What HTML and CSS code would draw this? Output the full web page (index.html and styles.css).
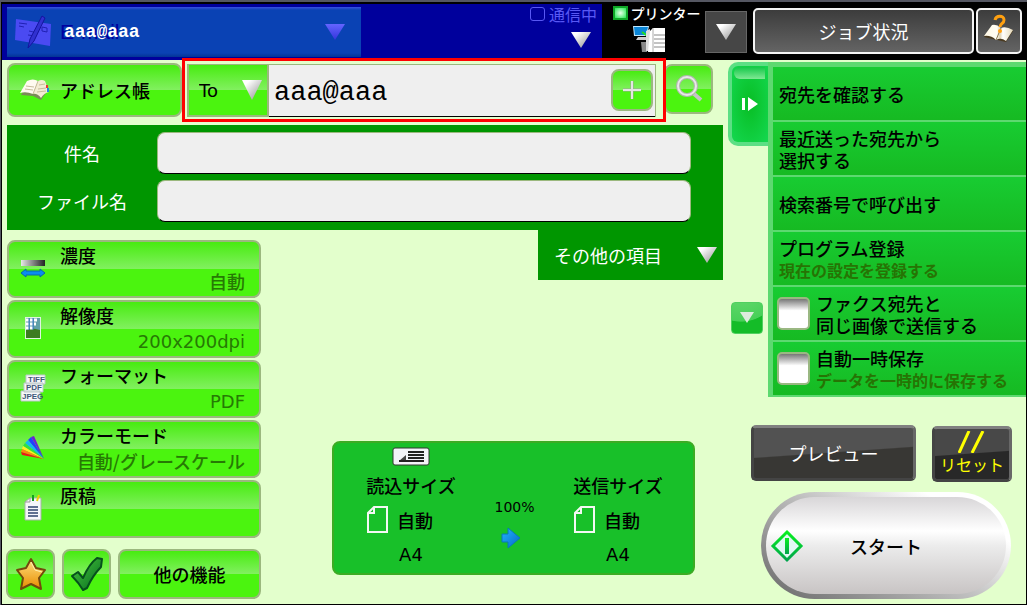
FILE: index.html
```html
<!DOCTYPE html>
<html lang="ja">
<head>
<meta charset="utf-8">
<meta name="viewport" content="width=device-width, initial-scale=1">
<title>E-mail</title>
<link rel="stylesheet" href="styles.css">
</head>
<body>
<svg class="defs" width="0" height="0" aria-hidden="true">
  <defs>
    <linearGradient id="silver" x1="0" y1="0" x2="1" y2="1"><stop offset="0.2" stop-color="#fff"/><stop offset="0.8" stop-color="#a8a8a8"/></linearGradient>
    <linearGradient id="violet" x1="0" y1="0" x2="0" y2="1"><stop offset="0" stop-color="#6464ff"/><stop offset="1" stop-color="#3434dc"/></linearGradient>
    <linearGradient id="blue" x1="0" y1="0" x2="1" y2="1"><stop offset="0" stop-color="#22b4ff"/><stop offset="1" stop-color="#0668c8"/></linearGradient>
    <linearGradient id="gold" x1="0" y1="0" x2="0" y2="1"><stop offset="0" stop-color="#ffe080"/><stop offset="1" stop-color="#e88c00"/></linearGradient>
    <linearGradient id="grey" x1="0" y1="0" x2="1" y2="0"><stop offset="0" stop-color="#e8e8e8"/><stop offset="1" stop-color="#222"/></linearGradient>
    <linearGradient id="page" x1="0" y1="0" x2="1" y2="0"><stop offset="0" stop-color="#fff8e4"/><stop offset="0.45" stop-color="#fffdf4"/><stop offset="0.55" stop-color="#ddd0b0"/><stop offset="0.65" stop-color="#fff"/><stop offset="1" stop-color="#e4d8b8"/></linearGradient>
    <linearGradient id="tick" x1="0" y1="0" x2="1" y2="1"><stop offset="0" stop-color="#4ac83c"/><stop offset="1" stop-color="#046a20"/></linearGradient>
    <linearGradient id="go" x1="0" y1="0" x2="0" y2="1"><stop offset="0" stop-color="#08f020"/><stop offset="1" stop-color="#00a44c"/></linearGradient>
  </defs>
</svg>
<div class="screen">
  <header class="topbar">
    <div class="mode">
      <button class="mode-tab" type="button">
        <svg class="mode-icon" width="38" height="34" viewBox="0 0 38 34"><path d="M2 4 L37 9 L36 31 L1 25Z" fill="#4a4af2"/><path d="M5 8l8 1M5 11l5 1M15 16l9 2M14 20l8 1M28 12l5 1v4l-5-1z" stroke="#2020b4" fill="none"/><path d="M28 1l3 2-11 23-6 7 2-9z" fill="#3030d0" stroke="#1414a0"/></svg>
        <span class="mode-name">E-mail<span class="mode-address">aaa@aaa</span></span>
        <svg class="mode-arrow" width="20" height="16" viewBox="0 0 20 16"><path d="M0 0H20L10 16Z" fill="url(#violet)"/></svg>
      </button>
      <button class="comm" type="button">
        <span class="comm-line"><i class="comm-lamp"></i>通信中</span>
        <svg width="20" height="16" viewBox="0 0 20 16"><path d="M0 0H20L10 16Z" fill="url(#silver)"/></svg>
      </button>
    </div>
    <div class="printer">
      <span class="printer-line"><i class="printer-lamp"></i>プリンター</span>
      <svg width="34" height="28" viewBox="0 0 34 28"><path d="M0 1h16l-2 10H1z" fill="#bfe8ff"/><path d="M1 2h14l-2 8H2z" fill="#0a86d8"/><path d="M5 12h8v3H3z" fill="#ccc"/><path d="M9 7l7 5" stroke="#20e020" stroke-width="2"/><path d="M8 17h6v10H9z" fill="#888"/><path d="M13 6l4-2v22h-4z" fill="#ddd"/><path d="M17 6l3-3h12v24H15z" fill="#fff"/><path d="M20 3v24" stroke="#aaa"/><path d="M21 10h11M21 14h11M21 18h11M21 22h11" stroke="#888"/></svg>
    </div>
    <button class="status-toggle" type="button" aria-label="状況を開く"><svg width="20" height="16" viewBox="0 0 20 16"><path d="M0 0H20L10 16Z" fill="url(#silver)"/></svg></button>
    <button class="dark-button jobs" type="button">ジョブ状況</button>
    <button class="dark-button help" type="button" aria-label="ヘルプ"><svg width="32" height="30" viewBox="0 0 32 30"><path d="M9 12L30 17 23 28 1 23Z" fill="#4a3a20"/><path d="M9 11Q14 10 18 14Q23 12 30 16L23 27Q18 23 13 26Q8 21 1 22Z" fill="url(#page)"/><path d="M18 14L13 26" stroke="#8a7850"/><path d="M12 6c1-5 9-5 9 0c0 4-4 3-4 7" fill="none" stroke="#ffa010" stroke-width="3"/><circle cx="17" cy="17" r="2" fill="#ffa010"/></svg></button>
  </header>

  <div class="workspace">
    <main class="left">
      <div class="address-row">
        <button class="glossy book" type="button"><svg width="32" height="22" viewBox="0 0 32 22"><path d="M2 17L9 5 20 5 29 12 22 22 14 18Z" fill="#7a8a58"/><path d="M1 15L8 3Q14 0 19 3L14 16Q7 13 1 15Z" fill="#fffaf0"/><path d="M19 3Q23 1 26 3L30 14Q25 15 22 20Q18 15 14 16Z" fill="#f4ecd4"/><path d="M19 3L14 16M7 8l8 1M6 11l8 1M20 7l6-1M19 11l8-1M18 14l9-1" stroke="#c8bc9c" fill="none"/><path d="M28 7v3" stroke="#e33" stroke-width="2"/><path d="M29 10v4" stroke="#28d" stroke-width="2"/></svg>アドレス帳</button>
        <div class="recipient">
          <label class="to"><select class="latin" aria-label="宛先種別"><option>To</option><option>Cc</option><option>Bcc</option></select>
            <svg class="to-arrow" width="20" height="20" viewBox="0 0 20 20"><path d="M0 0H20L10 20Z" fill="url(#silver)"/></svg></label>
          <input class="recipient-input" type="text" value="aaa@aaa" aria-label="宛先">
          <button class="glossy plus" type="button" aria-label="追加"><svg width="20" height="20" viewBox="0 0 20 20"><path d="M10 1V19M1 10H19" stroke="#9aa894" stroke-width="3"/><path d="M10 1V19M1 10H19" stroke="#e4e4e4" stroke-width="2"/></svg></button>
        </div>
        <button class="glossy search" type="button" aria-label="検索"><svg width="28" height="28" viewBox="0 0 28 28"><path d="M18 18l8 7" stroke="#c4c4c4" stroke-width="4"/><circle cx="12" cy="11" r="9" fill="none" stroke="#b0b8ac" stroke-width="4"/><circle cx="12" cy="11" r="9" fill="none" stroke="#e8e8e8" stroke-width="2"/></svg></button>
      </div>

      <div class="fields">
        <label for="subject">件名</label><input id="subject" type="text">
        <label for="filename">ファイル名</label><input id="filename" type="text">
      </div>

      <div class="lower">
        <div class="settings">
          <button class="glossy setting" type="button"><svg width="28" height="28" viewBox="0 0 28 28"><rect x="2" y="6" width="24" height="6" fill="url(#grey)"/><path d="M2 19l5-4v2h14v-2l5 4-5 4v-2H7v2z" fill="#0a8cf0" stroke="#0868a8"/></svg><span class="setting-name">濃度</span><span class="setting-value">自動</span></button>
          <button class="glossy setting" type="button"><svg width="28" height="28" viewBox="0 0 28 28"><rect x="6" y="3" width="16" height="22" fill="#dff4e0"/><rect x="7" y="4" width="14" height="12" fill="#60a0a8"/><path d="M7 16q5-3 14 0v8H7z" fill="#3c7c20"/><path d="M7 6h11M7 10h10M7 14h8" stroke="#fff" stroke-width="3" stroke-dasharray="3 1"/><path d="M10 4v12M14 4v12" stroke="#3474c8"/></svg><span class="setting-name">解像度</span><span class="setting-value latin">200x200dpi</span></button>
          <button class="glossy setting" type="button"><svg class="format-icon" width="28" height="28" viewBox="0 0 28 28"><path d="M7 1h19v9H7zM5 9h19v9H5zM2 17h19v10H2z" fill="#f6f8fa" stroke="#bcc8c8"/><text x="9" y="8">TIFF</text><text x="7" y="16">PDF</text><text x="3" y="25">JPEG</text></svg><span class="setting-name">フォーマット</span><span class="setting-value latin">PDF</span></button>
          <button class="glossy setting" type="button"><svg width="28" height="28" viewBox="0 0 28 28"><path d="M25 25L12 3 15 2Z" fill="#7020d0"/><path d="M25 25L9 6 12 3Z" fill="#2040ff"/><path d="M25 25L6 9 9 6Z" fill="#10b8f0"/><path d="M25 25L4 12 6 9Z" fill="#30e040"/><path d="M25 25L3 15 4 12Z" fill="#fff020"/><path d="M25 25L2 18 3 15Z" fill="#ff8810"/><path d="M25 25L3 21 2 18Z" fill="#f01818"/></svg><span class="setting-name">カラーモード</span><span class="setting-value">自動/グレースケール</span></button>
          <button class="glossy setting" type="button"><svg width="28" height="28" viewBox="0 0 28 28"><path d="M6 8l5-4h11v22H6z" fill="#f6f6fa" stroke="#a8b4a8"/><path d="M6 8h5V4" fill="none" stroke="#999"/><path d="M9 13h10M9 16h10M9 19h10M9 22h10" stroke="#607090" stroke-width="2"/><path d="M14 1v6" stroke="#10a020" stroke-width="2"/><path d="M20 1l-2 6" stroke="#f0d000" stroke-width="2"/></svg><span class="setting-name">原稿</span></button>
          <div class="tools">
            <button class="glossy tool" type="button" aria-label="お気に入り"><svg width="34" height="36" viewBox="0 0 34 36"><path d="M17 3L22 12 31 14 25 22 27 33 17 28 7 33 9 22 3 14 12 12Z" fill="url(#gold)" stroke="#74480c" stroke-width="2" stroke-linejoin="round"/><path d="M17 6l4 8 7 2" fill="none" stroke="#fff0b0"/></svg></button>
            <button class="glossy tool" type="button" aria-label="設定確認"><svg width="36" height="36" viewBox="0 0 36 36"><path d="M3 20L9 16 14 22Q20 8 28 2L33 3 32 11Q24 19 18 32L14 34Q10 27 3 20Z" fill="url(#tick)" stroke="#06501c" stroke-width="2" stroke-linejoin="round"/></svg></button>
            <button class="glossy other" type="button">他の機能</button>
          </div>
        </div>

        <div class="center">
          <button class="more" type="button">その他の項目<svg width="20" height="16" viewBox="0 0 20 16"><path d="M0 0H20L10 16Z" fill="url(#silver)"/></svg></button>
          <section class="sizes">
            <div class="size">
              <svg class="feeder" width="38" height="19" viewBox="0 0 38 19"><rect x="1" y="1" width="36" height="17" rx="2" fill="#f2f3f8" stroke="#303830"/><path d="M7 14L14 8V14Z" fill="#444"/><path d="M16 5h16M16 8h16M16 11h16M7 14h25" stroke="#222" stroke-width="2"/></svg>
              <span>読込サイズ</span>
              <span class="paper"><svg width="22" height="28" viewBox="0 0 22 28"><path d="M7 1H20V26H1V7Z" fill="none" stroke="#f4f8f4" stroke-width="2"/><path d="M7 1V7H1" fill="none" stroke="#f4f8f4" stroke-width="2"/></svg>自動</span>
              <span class="latin">A4</span>
            </div>
            <div class="ratio latin"><span>100%</span><svg width="20" height="22" viewBox="0 0 20 22"><path d="M1 7H7V1L19 11 7 21V15H1Z" fill="url(#blue)" stroke="#0878b8"/></svg></div>
            <div class="size">
              <span class="feeder"></span>
              <span>送信サイズ</span>
              <span class="paper"><svg width="22" height="28" viewBox="0 0 22 28"><path d="M7 1H20V26H1V7Z" fill="none" stroke="#f4f8f4" stroke-width="2"/><path d="M7 1V7H1" fill="none" stroke="#f4f8f4" stroke-width="2"/></svg>自動</span>
              <span class="latin">A4</span>
            </div>
          </section>
        </div>
      </div>
    </main>

    <aside class="right">
      <div class="drawer">
        <div class="handles">
          <button class="handle" type="button" aria-label="パネルを閉じる"><svg width="16" height="14" viewBox="0 0 16 14"><path d="M0 1h3v12H0zM6 0l10 7-10 7z" fill="#fff"/></svg></button>
          <button class="scroll" type="button" aria-label="次へ"><svg width="14" height="12" viewBox="0 0 14 12"><path d="M0 0H14L7 11Z" fill="#dcecdc"/></svg></button>
        </div>
        <div class="menu">
          <button type="button">宛先を確認する</button>
          <button type="button">最近送った宛先から<br>選択する</button>
          <button type="button">検索番号で呼び出す</button>
          <button type="button">プログラム登録<small>現在の設定を登録する</small></button>
          <label><input type="checkbox"><span>ファクス宛先と<br>同じ画像で送信する</span></label>
          <label><input type="checkbox"><span>自動一時保存<small>データを一時的に保存する</small></span></label>
        </div>
      </div>
      <div class="actions">
        <div class="action-pair">
          <button class="preview" type="button">プレビュー</button>
          <button class="reset" type="button"><svg width="28" height="22" viewBox="0 0 28 22"><path d="M1 22L11 0M14 22L25 0" stroke="#ff0" stroke-width="3"/></svg>リセット</button>
        </div>
        <button class="start" type="button"><svg width="34" height="34" viewBox="0 0 34 34"><path d="M17 3L31 17 17 31 3 17Z" fill="#e0f8f4" stroke="url(#go)" stroke-width="3"/><path d="M15 9h4v16h-4z" fill="url(#go)"/></svg>スタート</button>
      </div>
    </aside>
  </div>
</div>
</body>
</html>
```

FILE: styles.css
```css
* { box-sizing: border-box; }

body {
  margin: 0;
  background: #000;
  color: #000;
  font: 500 18px/22px "Noto Sans CJK JP", "Noto Sans", sans-serif;
}

button, input, select {
  margin: 0;
  padding: 0;
  border: 0;
  font: inherit;
  color: inherit;
}

button { background: none; }
svg { display: block; flex: none; }
.defs { position: absolute; }
.latin { font-family: "DejaVu Sans", "Noto Sans CJK JP", sans-serif; }

.screen {
  display: flex;
  flex-direction: column;
  min-height: 100vh;
  padding: 2px 1px 1px 1px;
  background: #000;
  border-top: 2px solid #555762;
  border-left: 1px solid #555762;
}

.topbar { display: flex; height: 56px; color: #fff; font-weight: 400; }

.mode { flex: 1; display: flex; justify-content: space-between; background: #00009c; }

.mode-tab {
  flex: 0 1 354px;
  display: flex;
  align-items: center;
  margin: 3px 0 3px 5px;
  padding: 0 16px 0 7px;
  background: linear-gradient(#3a50e0 0, #0a42b4 3px, #0a42b4 92%, #043494);
}
.mode-icon { margin-right: 8px; }
.mode-name { flex: 1; position: relative; text-align: left; color: #0000a0; font: 400 21px/22px "Liberation Sans", sans-serif; }
.mode-address { position: absolute; left: 4px; top: 0; color: #fff; font: 700 18px/22px "Liberation Mono", monospace; }

.comm {
  display: flex;
  flex-direction: column;
  align-items: flex-end;
  gap: 8px;
  padding: 0 5px 0 0;
  color: #5858f4;
  font-size: 16px;
  line-height: 20px;
}
.comm-line { display: flex; align-items: center; gap: 4px; }
.comm-lamp { width: 15px; height: 14px; border: 1px solid #5858f4; border-radius: 3px; }
.comm svg { margin-right: 6px; }

.printer {
  display: flex;
  flex-direction: column;
  align-items: center;
  gap: 3px;
  width: 103px;
  padding-left: 6px;
  font-size: 14px;
  font-weight: 500;
  line-height: 18px;
}
.printer svg { margin-right: 14px; }
.printer-line { display: flex; align-items: center; gap: 3px; }
.printer-lamp { width: 15px; height: 14px; border: 2px solid #10a828; background: radial-gradient(#e8ffe8, #20e850); }

.status-toggle {
  display: flex;
  align-items: center;
  justify-content: center;
  width: 42px;
  height: 42px;
  margin: 7px 6px 0 0;
  border: 1px solid #666;
  background: #464646;
}

.dark-button {
  height: 46px;
  margin-top: 4px;
  border: 2px solid #f4f4f4;
  border-radius: 5px;
  background: linear-gradient(#3c3c3c, #646464);
}
.jobs { width: 221px; margin-right: 2px; }
.help { display: flex; align-items: center; justify-content: center; width: 46px; margin-right: 4px; padding-bottom: 4px; }

.workspace { flex: 1; display: flex; background: #e3ffcc; }
.left { flex: 1; min-width: 0; padding: 3px 5px 5px 5px; }

.glossy {
  border: 2px solid #9bb87e;
  border-radius: 8px;
  background: linear-gradient(#47ec10 0, #82f060 50%, #4bf40f 50%);
}

.address-row { display: flex; align-items: flex-start; height: 62px; }
.book { display: flex; flex: none; align-items: center; gap: 9px; width: 175px; height: 54px; padding-left: 10px; }
.book svg { margin-bottom: 2px; }

.recipient { position: relative; flex: 1; min-width: 0; display: flex; height: 53px; margin: 1px 8px 0 5px; background: #efefef; border-top: 1px solid #9bb87e; border-right: 1px solid #9bb87e; }
.recipient::after { content: ""; position: absolute; inset: -7px -11px -5px -5px; border: 3px solid #f00; pointer-events: none; z-index: 1; }
.to { position: relative; flex: none; width: 82px; border: 2px solid #9bb87e; border-top: 0; background: linear-gradient(#47ec10 0, #82f060 50%, #4bf40f 50%); }
.to select { appearance: none; width: 100%; height: 100%; padding: 2px 0 0 10px; background: none; }
.to-arrow { position: absolute; right: 5px; top: 15px; pointer-events: none; }
.recipient-input { flex: 1; min-width: 0; padding: 4px 48px 0 5px; background: none; border-bottom: 1px solid #000; font: 400 27px/32px "Liberation Mono", monospace; }
.plus { position: absolute; right: 2px; top: 4px; display: flex; align-items: center; justify-content: center; width: 42px; height: 42px; }
.search { display: flex; flex: none; align-items: center; justify-content: center; width: 49px; height: 50px; margin: 1px 10px 0 0; }

.fields {
  display: grid;
  grid-template-columns: 150px 1fr;
  gap: 6px 0;
  padding: 7px 32px 8px 0;
  background: #009600;
  color: #fff;
  font-weight: 400;
}
.fields label { align-self: center; text-align: center; }
.fields input { height: 42px; min-width: 0; padding: 0 10px; border: 1px solid #9bb87e; border-bottom-color: #000; border-radius: 8px; background: #efefef; color: #000; }

.lower { display: flex; }
.settings { display: flex; flex-direction: column; gap: 2px; width: 254px; padding-top: 10px; }
.setting {
  display: grid;
  grid-template-columns: 40px 1fr;
  grid-template-rows: 26px 26px;
  column-gap: 1px;
  height: 58px;
  padding: 0 14px 2px 10px;
}
.setting svg { grid-column: 1; grid-row: 1 / 3; align-self: center; }
.setting-name { grid-column: 2; grid-row: 1; text-align: left; line-height: 26px; }
.setting-value { grid-column: 2; grid-row: 2; text-align: right; line-height: 26px; color: #267a04; }
.setting-value.latin { line-height: 28px; }
.format-icon text { font: 700 8px/8px "Liberation Sans", sans-serif; fill: #405878; }

.tools { display: flex; gap: 7px; margin: 9px 0 0 -1px; }
.tool { display: flex; align-items: center; justify-content: center; width: 49px; height: 50px; }
.other { flex: 1; height: 50px; }

.center { flex: 1; display: flex; flex-direction: column; }
.more {
  display: flex;
  align-items: center;
  justify-content: space-between;
  align-self: flex-end;
  width: 185px;
  height: 50px;
  padding: 0 6px 0 16px;
  background: #009600;
  color: #fff;
  font-weight: 400;
}
.sizes {
  display: flex;
  justify-content: space-between;
  margin: 161px 28px 0 71px;
  height: 134px;
  padding: 4px 28px 0 30px;
  border: 2px solid #3cac24;
  border-radius: 8px;
  background: #18c029;
}
.size { display: flex; flex-direction: column; align-items: center; width: 94px; }
.feeder { height: 19px; margin-bottom: 8px; }
.paper { display: flex; align-items: center; gap: 8px; align-self: flex-start; margin: 10px 0; padding-left: 3px; height: 28px; }
.ratio { display: flex; flex-direction: column; align-items: center; gap: 9px; padding-top: 49px; font-size: 14px; }
.ratio svg { margin-right: 7px; }

.right { display: flex; flex-direction: column; width: 298px; padding-top: 2px; }
.drawer { display: flex; }
.handles { display: flex; flex-direction: column; align-items: center; width: 40px; }
.handle {
  position: relative;
  display: flex;
  align-items: center;
  justify-content: center;
  width: 40px;
  height: 84px;
  border: 4px solid #5cdf84;
  border-right: 0;
  border-radius: 10px 0 0 10px;
  background: radial-gradient(#08be24, #14d850);
}
.handle::before { content: ""; position: absolute; left: 2px; right: 3px; top: 1px; height: 12px; border-radius: 6px 0 0 6px; background: linear-gradient(#14c848, #80e894); }
.scroll {
  display: flex;
  align-items: center;
  justify-content: center;
  width: 32px;
  height: 32px;
  margin: 156px 2px 0 0;
  border: 1px solid #50d060;
  border-radius: 4px;
  background: radial-gradient(circle 40px at 30% -70%, #70dc78 0, #48d058 98%, #14bc28 100%);
}

.menu { flex: 1; border: 5px solid #5dd970; border-right: 0; border-bottom: 0; }
.menu button, .menu label {
  display: flex;
  flex-direction: column;
  align-items: flex-start;
  justify-content: center;
  width: 100%;
  height: 55px;
  padding: 0 6px;
  border-bottom: 2px solid #5dd970;
  background: linear-gradient(#18cc32, #16ba22);
  text-align: left;
}
.menu label { flex-direction: row; align-items: center; justify-content: flex-start; gap: 6px; padding: 0 4px; }
.menu small { display: block; font-size: 16px; font-weight: 700; color: #267404; line-height: 22px; }
.menu input {
  appearance: none;
  flex: none;
  width: 33px;
  height: 33px;
  border: 2px solid #9ab882;
  border-radius: 5px;
  background: linear-gradient(#777, #fff 40%);
}

.actions { padding: 28px 14px 0 23px; }
.action-pair { display: flex; justify-content: space-between; align-items: flex-start; }
.preview, .reset {
  height: 56px;
  border: 3px solid #444;
  border-top-color: #808080;
  border-right-color: #686868;
  border-radius: 5px;
  background: linear-gradient(176deg, #525252 48%, #383734 50%);
  color: #fff;
  font-weight: 400;
}
.preview { width: 165px; }
.reset { display: flex; flex-direction: column; align-items: center; width: 80px; margin-top: 1px; padding-top: 2px; color: #ff0; font-size: 16px; background: linear-gradient(176deg, #484848 48%, #282828 50%); }
.start {
  display: flex;
  align-items: center;
  gap: 46px;
  width: 250px;
  height: 107px;
  margin: 10px 0 0 10px;
  padding-left: 4px;
  border: 5px solid transparent;
  border-radius: 54px;
  background:
    linear-gradient(#d8d6d8 0, #fff 35%, #ececec 50%, #c8c4c4 100%) padding-box,
    linear-gradient(30deg, #666 0, #c0c0c0 50%, #fff 80%) border-box;
}
```
